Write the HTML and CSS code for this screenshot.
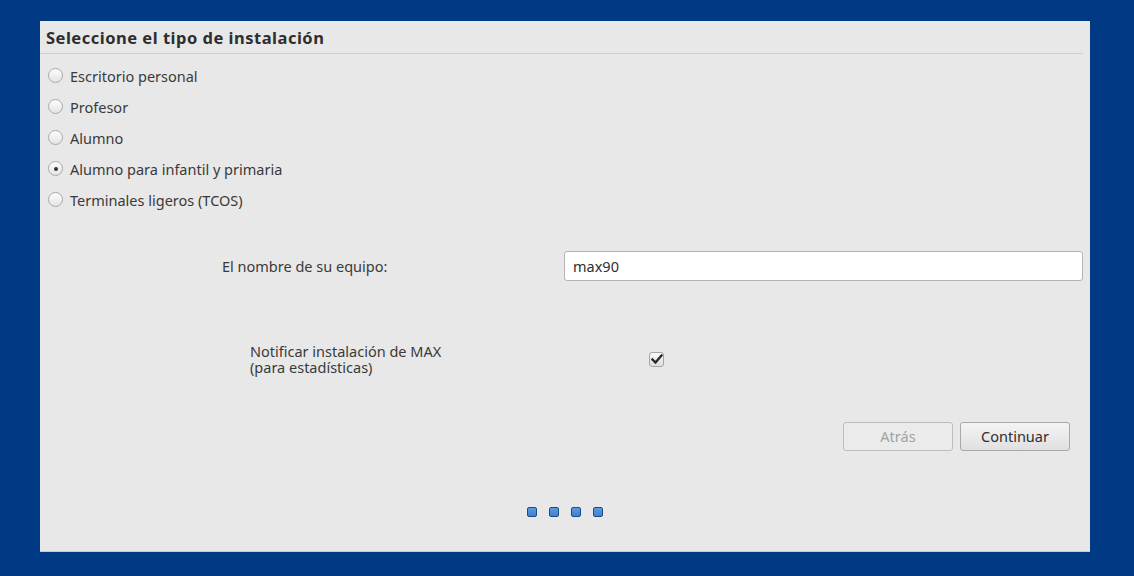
FILE: index.html
```html
<!DOCTYPE html>
<html lang="es">
<head>
<meta charset="utf-8">
<link rel="stylesheet" href="styles.css">
</head>
<body>
<div class="panel">
  <div class="header">Seleccione el tipo de instalación</div>
  <div class="options">
    <div class="option"><span class="radio"></span><span>Escritorio personal</span></div>
    <div class="option"><span class="radio"></span><span>Profesor</span></div>
    <div class="option"><span class="radio"></span><span>Alumno</span></div>
    <div class="option"><span class="radio checked"></span><span>Alumno para infantil y primaria</span></div>
    <div class="option"><span class="radio"></span><span>Terminales ligeros (TCOS)</span></div>
  </div>
  <div class="name-row">
    <div class="name-label">El nombre de su equipo:</div>
    <div class="input">max90</div>
  </div>
  <div class="notify-row">
    <div class="notify-label">
      <div class="line">Notificar instalación de MAX</div>
      <div class="line">(para estadísticas)</div>
    </div>
    <div class="checkbox">
      <svg width="12" height="11" viewBox="0 0 12 11"><path d="M1.5 5.5 L4.5 8.5 L10.5 1.5" fill="none" stroke="#2b2b2b" stroke-width="2.4" stroke-linecap="square"/></svg>
    </div>
  </div>
  <div class="buttons">
    <div class="btn disabled">Atrás</div>
    <div class="btn">Continuar</div>
  </div>
  <div class="dots">
    <span class="dot"></span><span class="dot"></span><span class="dot"></span><span class="dot"></span>
  </div>
</div>
</body>
</html>
```
FILE: styles.css
```css
html, body {
  margin: 0;
  padding: 0;
  background: #003a84;
  height: 576px;
  overflow: hidden;
}
body {
  padding-top: 21px;
  padding-left: 40px;
  font-family: "Noto Sans", "DejaVu Sans", sans-serif;
  color: #3a3a3a;
  font-size: 14.5px;
}
.panel {
  width: 1050px;
  height: 530px;
  background: #e8e8e8;
  border-bottom: 1px solid #c9ccd2;
  display: flex;
  flex-direction: column;
}
.header {
  height: 32px;
  line-height: 34px;
  margin-right: 7px;
  padding-left: 6px;
  font-weight: bold;
  font-size: 16.5px;
  color: #2e2e2e;
  border-bottom: 1px solid #cfcfcf;
  letter-spacing: 0.5px;
}
.options {
  margin-top: 6px;
  display: flex;
  flex-direction: column;
}
.option {
  height: 31px;
  display: flex;
  align-items: center;
  padding-left: 8px;
  gap: 7px;
}
.radio {
  width: 13px;
  height: 13px;
  border-radius: 50%;
  border: 1px solid #a8a8a8;
  background: linear-gradient(#fdfdfd, #e4e4e4);
  box-sizing: content-box;
  position: relative;
}
.radio.checked::after {
  content: "";
  position: absolute;
  left: 4.5px;
  top: 4.5px;
  width: 4px;
  height: 4px;
  border-radius: 50%;
  background: #333;
}
.name-row {
  margin-top: 36px;
  display: flex;
  align-items: center;
  padding-left: 182px;
}
.name-label {
  width: 342px;
}
.input {
  width: 509px;
  height: 28px;
  line-height: 28px;
  padding-left: 8px;
  background: #fff;
  border: 1px solid #b4b4b4;
  border-radius: 3px;
  color: #2e2e2e;
}
.notify-row {
  margin-top: 62px;
  display: flex;
  align-items: center;
  padding-left: 210px;
}
.notify-label {
  width: 399px;
}
.line {
  height: 16px;
  line-height: 16px;
}
.checkbox {
  width: 13px;
  height: 13px;
  border: 1px solid #a6a6a6;
  border-radius: 3px;
  background: linear-gradient(#fafafa, #dedede);
  display: flex;
  align-items: center;
  justify-content: center;
}
.buttons {
  margin-top: 47px;
  display: flex;
  justify-content: flex-end;
  gap: 7px;
  padding-right: 20px;
}
.btn {
  width: 108px;
  height: 27px;
  line-height: 27px;
  text-align: center;
  border: 1px solid #a9a9a9;
  border-radius: 3px;
  background: linear-gradient(#f4f4f4, #e0e0e0);
  color: #2e2e2e;
}
.btn.disabled {
  color: #a2a2a2;
  border-color: #bdbdbd;
  background: #ebebeb;
}
.dots {
  margin-top: 56px;
  display: flex;
  justify-content: center;
  gap: 12px;
}
.dot {
  width: 8px;
  height: 8px;
  border: 1px solid #1f4c80;
  border-radius: 2px;
  background: linear-gradient(#5a9be0, #3d82d0);
}
```
